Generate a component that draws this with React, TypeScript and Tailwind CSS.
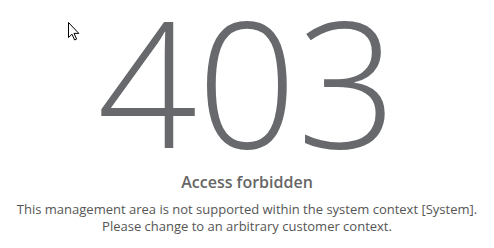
export default function App() {
  return (
    <div className="relative w-[494px] h-[248px] bg-white overflow-hidden font-['Open_Sans',sans-serif]">
      <div className="flex flex-col items-center">
        <div className="text-[175px] leading-[160px] font-light text-[#67696c]">403</div>
        <h1 className="mt-[11px] text-[16px] leading-[22px] font-semibold text-[#666666]">Access forbidden</h1>
        <p className="mt-[8px] text-center text-[13px] leading-[17px] text-[#555555]">
          This management area is not supported within the system context [System].
          <br />
          Please change to an arbitrary customer context.
        </p>
      </div>
      {/* mouse cursor */}
      <svg className="absolute left-[68px] top-[22px]" width="12" height="19" viewBox="0 0 12 19">
        <path d="M0.5 0.5 L0.5 15.5 L4 12.2 L6.6 18 L8.6 17.1 L6 11.4 L10.8 11.4 Z" fill="white" stroke="black" strokeWidth="1" strokeLinejoin="miter" />
      </svg>
    </div>
  );
}
